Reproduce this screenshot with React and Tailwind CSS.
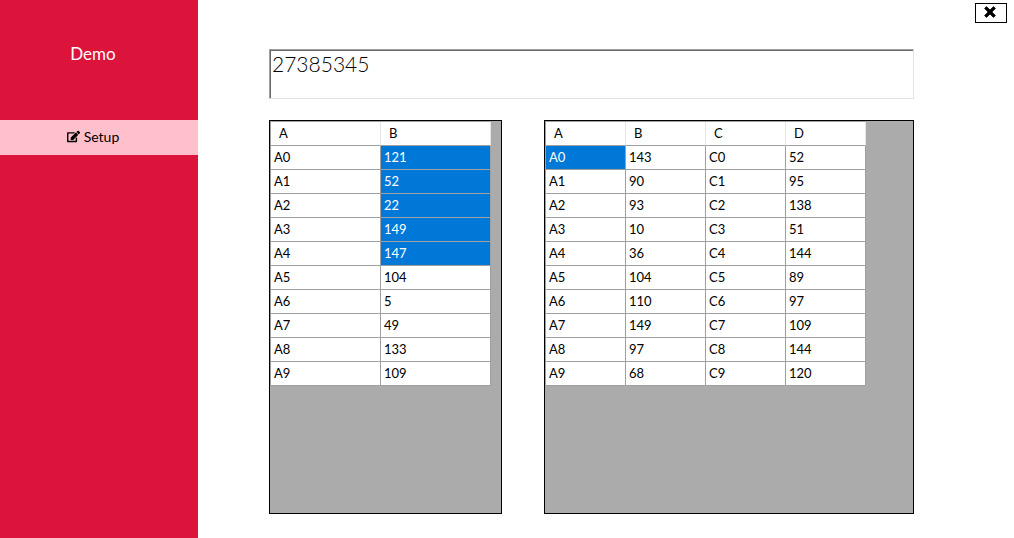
import { useState } from "react";
import { FaEdit } from "react-icons/fa";

const leftColumns = ["A", "B"];
const leftRows = [121, 52, 22, 149, 147, 104, 5, 49, 133, 109].map((b, i) => [`A${i}`, b]);

const rightColumns = ["A", "B", "C", "D"];
const bValues = [143, 90, 93, 10, 36, 104, 110, 149, 97, 68];
const dValues = [52, 95, 138, 51, 144, 89, 97, 109, 144, 120];
const rightRows = bValues.map((b, i) => [`A${i}`, b, `C${i}`, dValues[i]]);

function DataGrid({ label, columns, rows, isSelected, columnClass }) {
  return (
    <div className="overflow-auto border border-black bg-[#ababab]">
      <table
        aria-label={label}
        className="table-fixed border-separate border-spacing-0 border-l border-t border-[#a0a0a0] bg-white text-[13px] leading-4"
      >
        <thead>
          <tr className="h-6">
            {columns.map((name) => (
              <th
                key={name}
                scope="col"
                className={`${columnClass} border-b border-r border-b-[#a0a0a0] border-r-[#e5e5e5] p-0 pb-0.5 pl-2 text-left font-normal`}
              >
                {name}
              </th>
            ))}
          </tr>
        </thead>
        <tbody>
          {rows.map((row, r) => (
            <tr key={r} className="h-6">
              {row.map((value, c) => (
                <td
                  key={c}
                  className={`border-b border-r border-[#a0a0a0] p-0 pb-0.5 pl-[3px] ${
                    isSelected(r, c) ? "bg-[#0078d7] text-white" : ""
                  }`}
                >
                  {value}
                </td>
              ))}
            </tr>
          ))}
        </tbody>
      </table>
    </div>
  );
}

export default function App() {
  const [text, setText] = useState("27385345");

  return (
    <div className="flex min-h-screen bg-white font-['Lato',sans-serif] text-black">
      <aside className="flex w-[198px] shrink-0 flex-col bg-[#dc143c]">
        <h1 className="flex h-[120px] items-start justify-center pr-3 pt-11 text-[17px] font-normal leading-5 text-white">
          Demo
        </h1>
        <nav>
          <button
            type="button"
            className="flex h-[35px] w-full items-center justify-center gap-1 bg-[#ffc0cb] pb-0.5 pr-3 text-sm"
          >
            <FaEdit aria-hidden="true" className="size-[13px]" />
            Setup
          </button>
        </nav>
      </aside>

      <div className="flex min-w-0 flex-1 flex-col">
        <header className="flex justify-end pr-[7px] pt-[3px]">
          <button
            type="button"
            aria-label="Close"
            className="flex h-5 w-8 items-center justify-center border border-black bg-white pb-0.5"
          >
            <svg viewBox="0 0 12 12" className="mr-0.5 size-3" aria-hidden="true">
              <path
                d="M2.5 0.6 6 4.1 9.5 0.6 11.4 2.5 7.9 6 11.4 9.5 9.5 11.4 6 7.9 2.5 11.4 0.6 9.5 4.1 6 0.6 2.5Z"
                fill="black"
                stroke="black"
                strokeWidth="0.8"
                strokeLinejoin="round"
              />
            </svg>
          </button>
        </header>

        <main className="flex flex-1 flex-col gap-[21px] pb-6 pl-[71px] pr-[100px] pt-[26px]">
          <textarea
            aria-label="Value"
            value={text}
            onChange={(e) => setText(e.target.value)}
            className="block h-[50px] w-full resize-none border border-b-[#e3e3e3] border-l-[#a0a0a0] border-r-[#e3e3e3] border-t-[#a0a0a0] px-0.5 py-0 text-[21px] font-light leading-7 shadow-[inset_1px_1px_0_#696969] outline-none"
          />
          <div className="grid flex-1 grid-cols-[233fr_370fr] gap-[42px]">
            <DataGrid
              label="Columns A and B"
              columns={leftColumns}
              rows={leftRows}
              columnClass="w-[110px]"
              isSelected={(r, c) => c === 1 && r < 5}
            />
            <DataGrid
              label="Columns A to D"
              columns={rightColumns}
              rows={rightRows}
              columnClass="w-20"
              isSelected={(r, c) => r === 0 && c === 0}
            />
          </div>
        </main>
      </div>
    </div>
  );
}
